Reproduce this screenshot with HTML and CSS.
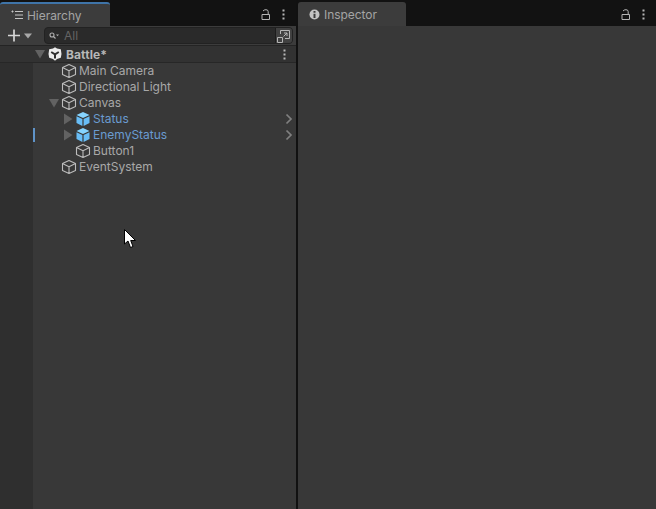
FILE: index.html
```html
<!DOCTYPE html>
<html>
<head>
<meta charset="utf-8">
<title>Unity Editor</title>
<link rel="stylesheet" href="styles.css">
</head>
<body>
<svg class="defs" width="0" height="0">
  <defs>
    <symbol id="cube" viewBox="0 0 16 16"><path d="M8 1.500 14.500 4.600V11.400L8 14.500 1.500 11.400V4.600ZM1.500 4.600 8 7.700 14.500 4.600M8 7.700V14.500" fill="none" stroke="currentColor" stroke-width="1.100" stroke-linejoin="round"/></symbol>
    <symbol id="prefab" viewBox="0 0 16 16"><path d="M8 1 14.500 4 8 7 1.500 4Z" fill="#86d4ff"/><path d="M1.500 5.200 7.400 8V15L1.500 12Z M14.500 5.200 8.600 8V15L14.500 12Z" fill="#68bdf6"/></symbol>
    <symbol id="lock" viewBox="0 0 10 11"><path d="M1 5.500H8.500V10.500H1ZM2 2Q3 .7 5 .7 7.200 .7 7.200 2.700V5.500" fill="none" stroke="currentColor"/></symbol>
    <symbol id="dots" viewBox="0 0 3 11"><path d="M0.500 0.500H2.500V2.500H0.500ZM0.500 4.500H2.500V6.500H0.500ZM0.500 8.500H2.500V10.500H0.500Z" fill="currentColor"/></symbol>
    <symbol id="down" viewBox="0 0 10 10"><path d="M0 1H10L5 9.500Z" fill="currentColor"/></symbol>
    <symbol id="right" viewBox="0 0 10 12"><path d="M1 .5V11.500L9.500 6Z" fill="currentColor"/></symbol>
    <symbol id="chev" viewBox="0 0 8 12"><path d="M1.500 1.500 6 6 1.500 10.500" fill="none" stroke="currentColor" stroke-width="1.700"/></symbol>
  </defs>
</svg>
<div class="editor">
  <section class="panel hierarchy">
    <header class="tabbar">
      <div class="tab tab-active">
        <svg class="tab-icon" viewBox="0 0 12 10" width="12" height="10"><path d="M4 1.500H12M4 5H12M4 8.500H12M0.500 1.500H2.500" fill="none" stroke="currentColor"/><path d="M1.500 .5V2.500" stroke="currentColor"/></svg>
        <span>Hierarchy</span>
      </div>
      <div class="tab-actions">
        <svg class="lock" width="10" height="11"><use href="#lock"/></svg>
        <svg class="dots" width="3" height="11"><use href="#dots"/></svg>
      </div>
    </header>
    <div class="toolbar">
      <div class="add">
        <svg width="13" height="13" viewBox="0 0 13 13"><path d="M6 .5V12.500M0 6.500H12" stroke="currentColor" stroke-width="1.700"/></svg>
        <svg class="add-caret" width="8" height="6" viewBox="0 0 8 6"><path d="M0 .5H8L4 5.500Z" fill="currentColor"/></svg>
      </div>
      <div class="search">
        <svg class="search-icon" width="10" height="8" viewBox="0 0 10 8"><circle cx="3" cy="3" r="2" fill="none" stroke="currentColor" stroke-width="1.100"/><path d="M4.500 4.500 6.500 6.500" stroke="currentColor" stroke-width="1.100"/><path d="M7 2.500H10L8.500 4.200Z" fill="currentColor"/></svg>
        <span class="search-text">All</span>
        <div class="search-btn">
          <svg width="14" height="14" viewBox="0 0 14 14"><path d="M3.500 5V1.500H12.500V9.500H8M.5 8.500H5.500V13.500H.5ZM6.500 7.500 10 4M7 4H10V7" fill="none" stroke="currentColor"/></svg>
        </div>
      </div>
    </div>
    <div class="tree">
      <div class="scene-row">
        <svg class="arrow arrow-big" width="10" height="10"><use href="#down"/></svg>
        <svg class="unity" width="14" height="14" viewBox="0 0 14 14"><path d="M7 .3 9 1.500 12.800 2.200 13.500 7 12.800 10.800 9 12 7 13.700 5 12 1.200 10.800 .5 7 1.200 2.200 5 1.500Z" fill="#ececec"/><path d="M7 7.300V11.500M7 7.300 3.200 5M7 7.300 10.800 5" stroke="#2e2e2e" stroke-width="2"/></svg>
        <span class="scene-name">Battle*</span>
        <svg class="dots scene-dots" width="3" height="11"><use href="#dots"/></svg>
      </div>
      <div class="rows">
        <div class="row depth-1"><svg class="obj"><use href="#cube"/></svg><span>Main Camera</span></div>
        <div class="row depth-1"><svg class="obj"><use href="#cube"/></svg><span>Directional Light</span></div>
        <div class="row depth-1"><svg class="arrow" width="10" height="10"><use href="#down"/></svg><svg class="obj"><use href="#cube"/></svg><span>Canvas</span></div>
        <div class="row depth-2 prefab"><svg class="arrow" width="10" height="12"><use href="#right"/></svg><svg class="obj"><use href="#prefab"/></svg><span>Status</span><svg class="chev" width="8" height="12"><use href="#chev"/></svg></div>
        <div class="row depth-2 prefab marked"><svg class="arrow" width="10" height="12"><use href="#right"/></svg><svg class="obj"><use href="#prefab"/></svg><span>EnemyStatus</span><svg class="chev" width="8" height="12"><use href="#chev"/></svg></div>
        <div class="row depth-2"><svg class="obj"><use href="#cube"/></svg><span>Button1</span></div>
        <div class="row depth-1"><svg class="obj"><use href="#cube"/></svg><span>EventSystem</span></div>
      </div>
    </div>
  </section>
  <section class="panel inspector">
    <header class="tabbar">
      <div class="tab">
        <svg class="tab-icon info" width="11" height="11" viewBox="0 0 11 11"><circle cx="5.500" cy="5.500" r="5" fill="#c4c4c4"/><path d="M4.500 2H6.500V3.700H4.500ZM4.500 4.700H6.500V9H4.500Z" fill="#3c3c3c"/></svg>
        <span>Inspector</span>
      </div>
      <div class="tab-actions">
        <svg class="lock" width="10" height="11"><use href="#lock"/></svg>
        <svg class="dots" width="3" height="11"><use href="#dots"/></svg>
      </div>
    </header>
    <div class="inspector-body"></div>
  </section>
</div>
<svg class="cursor" width="13" height="20" viewBox="0 0 13 20"><path d="M.5 .5V15L4 12 6.500 18.500 9 17.500 6.700 11.500H11.500Z" fill="#fff" stroke="#000"/></svg>
</body>
</html>
```

FILE: styles.css
```css
* { box-sizing: border-box; }
html, body { margin: 0; height: 100%; }
body {
  background: #111;
  font-family: Inter, "Noto Sans", sans-serif;
  font-size: 12px;
  color: #bdbdbd;
  overflow: hidden;
  position: relative;
}
.defs { position: absolute; }
svg { display: block; flex: none; }
.editor { display: flex; gap: 2px; height: 509px; background: #111; }
.panel { display: flex; flex-direction: column; }
.hierarchy { width: 296px; }
.inspector { flex: 1; }
.tabbar {
  height: 26px;
  flex: none;
  display: flex;
  align-items: flex-end;
  justify-content: space-between;
  background: #121212;
}
.tab {
  width: 108px;
  height: 24px;
  padding: 1px 0 0 11px;
  display: flex;
  align-items: center;
  gap: 4px;
  background: #3c3c3c;
  border-radius: 3px 3px 0 0;
  color: #a4a4a4;
  letter-spacing: -.05px;
}
.tab-active {
  width: 110px;
  border-top: 2px solid #3f74a8;
  padding-top: 0;
}
.tab-icon { color: #c4c4c4; }
.tab-actions {
  display: flex;
  align-items: center;
  gap: 11px;
  height: 26px;
  padding: 3px 11px 0 0;
  color: #b4b4b4;
}
.toolbar {
  height: 20px;
  flex: none;
  display: flex;
  align-items: center;
  background: #3c3c3c;
  border-bottom: 1px solid #242424;
}
.add {
  width: 44px;
  flex: none;
  padding-left: 8px;
  display: flex;
  align-items: center;
  gap: 3px;
  color: #d6d6d6;
}
.add-caret { color: #a8a8a8; }
.search {
  flex: 1;
  height: 17px;
  margin-right: 3px;
  padding-left: 4px;
  display: flex;
  align-items: center;
  background: #2a2a2a;
  border: 1px solid #222;
  border-radius: 4px;
  color: #b0b0b0;
}
.search-text { margin-left: 5px; color: #646464; flex: 1; }
.search-btn {
  width: 17px;
  height: 15px;
  display: flex;
  align-items: center;
  justify-content: center;
  background: #414141;
  border-left: 1px solid #1d1d1d;
  border-radius: 0 3px 3px 0;
  color: #b4b4b4;
}
.tree {
  flex: 1;
  display: flex;
  flex-direction: column;
  background: linear-gradient(to right, #2f2f2f 33px, #383838 33px);
}
.scene-row {
  height: 17px;
  flex: none;
  display: flex;
  align-items: center;
  padding: 0 10px 0 35px;
  background: #323232;
  border-bottom: 1px solid #272727;
  color: #b8b8b8;
  font-weight: 700;
}
.unity { margin-left: 3px; margin-right: 4px; }
.scene-name { flex: 1; letter-spacing: .1px; }
.arrow { color: #626262; }
.rows { display: flex; flex-direction: column; }
.row {
  height: 16px;
  display: flex;
  align-items: center;
  position: relative;
  white-space: nowrap;
  color: #a8a8a8;
}
.row span { flex: 1; margin: 0 0 2px 2px; }
.obj { width: 16px; height: 16px; color: #bcbcbc; }
.depth-1 { padding-left: 61px; }
.depth-1 .arrow { margin-left: -12px; margin-right: 2px; }
.depth-2 { padding-left: 75px; padding-right: 3px; }
.depth-2 .arrow { margin-left: -12px; margin-right: 2px; }
.prefab { color: #6a9bd0; }
.chev { color: #808080; }
.marked::before {
  content: "";
  position: absolute;
  left: 33px;
  top: 1px;
  width: 2px;
  height: 14px;
  background: #5f93c8;
}
.inspector-body { flex: 1; background: #383838; }
.cursor { position: absolute; left: 124px; top: 229px; }
```
